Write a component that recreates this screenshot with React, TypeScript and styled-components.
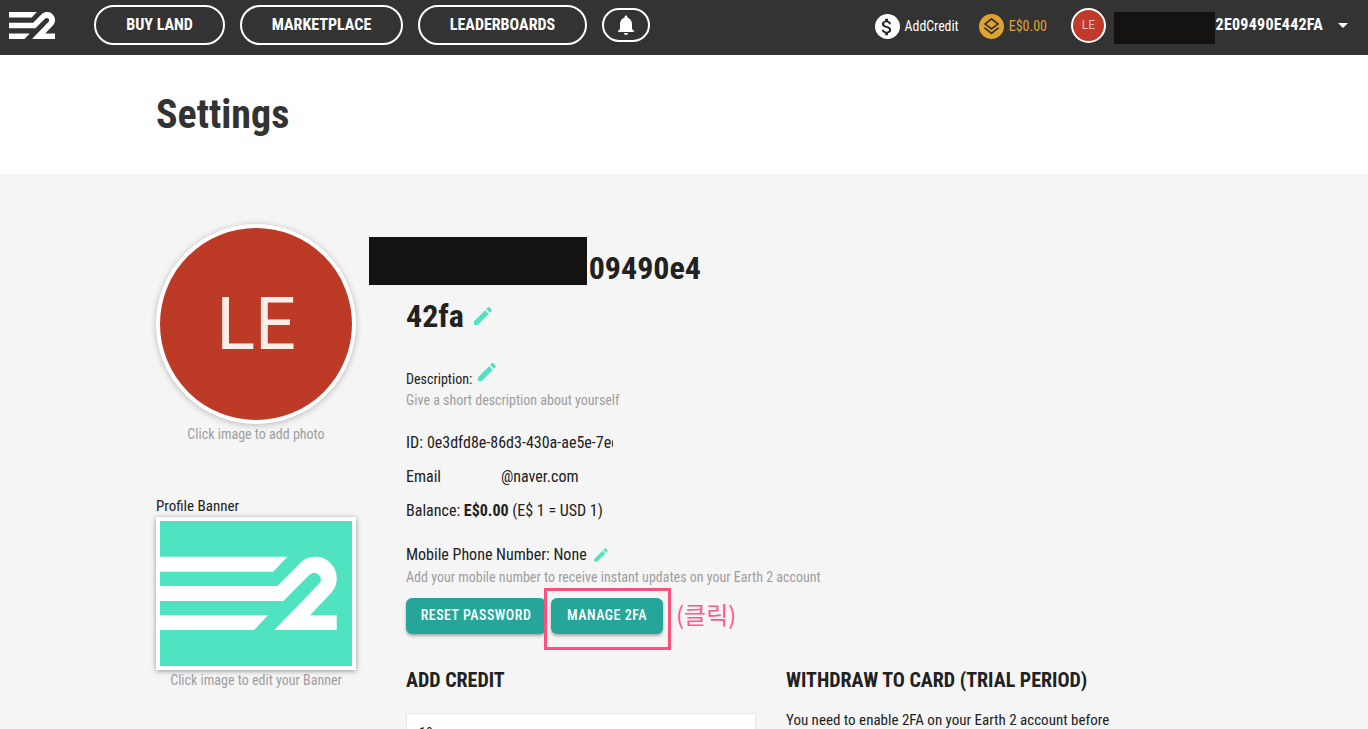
import React from 'react';
import styled, { createGlobalStyle } from 'styled-components';

const LOGO_PATH =
  'M0 35.7H127.3L113.3 50.7H0ZM0 94.3H108L94 109H0ZM0 65H117.3L143 39.3A21.7 21.7 0 0 1 171.5 71.5L150 94.3H176.7V109H114.3L160 61.7A6.7 6.7 0 0 0 150 53.3L123.3 80H0Z';

const GlobalStyle = createGlobalStyle`
  html, body { margin: 0; padding: 0; height: 100%; overflow: hidden; }
  body { background: #f5f5f5; font-family: Roboto, "Liberation Sans", sans-serif; font-stretch: 75%; color: #212121; }
  * { box-sizing: border-box; }
`;

const Header = styled.header`
  display: flex;
  align-items: center;
  height: 55px;
  padding: 0 20px 5px 9px;
  background: #333333;
`;

const Logo = styled.svg`
  display: block;
  width: 46px;
  height: 27px;
  margin-right: 39px;
`;

const Nav = styled.nav`
  display: flex;
  align-items: center;
  gap: 15px;
`;

const NavPill = styled.a<{ $w: number }>`
  display: flex;
  align-items: center;
  justify-content: center;
  width: ${({ $w }) => $w}px;
  height: 40px;
  padding-bottom: 2px;
  border: 2px solid #fff;
  border-radius: 20px;
  color: #fff;
  font-size: 16px;
  font-weight: 700;
`;

const BellPill = styled.a`
  display: flex;
  align-items: center;
  justify-content: center;
  width: 48px;
  height: 34px;
  border: 2px solid #fff;
  border-radius: 17px;
`;

const Right = styled.div`
  display: flex;
  align-items: center;
  margin-left: auto;
`;

const Coin = styled.span<{ $bg: string }>`
  display: flex;
  align-items: center;
  justify-content: center;
  width: 25px;
  height: 25px;
  margin: 3px 5px 0 0;
  border-radius: 50%;
  background: ${({ $bg }) => $bg};
`;

const Credit = styled.span<{ $color: string; $mr: number; $size: number }>`
  margin: 1px ${({ $mr }) => $mr}px 0 0;
  color: ${({ $color }) => $color};
  font-size: ${({ $size }) => $size}px;
`;

const MiniAvatar = styled.span`
  display: flex;
  align-items: center;
  justify-content: center;
  width: 35px;
  height: 35px;
  border: 2px solid #fff;
  border-radius: 50%;
  background: #c0392b;
  color: #eeb9b3;
  font-size: 12px;
  font-stretch: 100%;
`;

const UserName = styled.span`
  position: relative;
  display: block;
  width: 209px;
  margin: 0 15px 0 8px;
  color: #fff;
  font-size: 16px;
  font-weight: 700;
  line-height: 20px;
  text-align: right;
  white-space: nowrap;
  letter-spacing: 0.25px;
`;

const Redact = styled.span<{ $w: number; $h: number; $l: number; $t: number }>`
  position: absolute;
  left: ${({ $l }) => $l}px;
  top: ${({ $t }) => $t}px;
  width: ${({ $w }) => $w}px;
  height: ${({ $h }) => $h}px;
  background: #141311;
`;

const Caret = styled.span`
  width: 0;
  height: 0;
  border-left: 5px solid transparent;
  border-right: 5px solid transparent;
  border-top: 5px solid #fff;
`;

const TitleBar = styled.div`
  display: flex;
  align-items: center;
  height: 119px;
  padding-left: 156px;
  background: #fff;
`;

const PageTitle = styled.h1`
  margin: 0;
  font-size: 40px;
  font-weight: 700;
  color: #333;
`;

const Content = styled.main`
  display: flex;
  padding: 50px 0 0 156px;
`;

const LeftCol = styled.div`
  display: flex;
  flex-direction: column;
  width: 200px;
  margin-right: 50px;
`;

const BigAvatar = styled.div`
  display: flex;
  align-items: center;
  justify-content: center;
  width: 200px;
  height: 200px;
  border: 4px solid #fff;
  border-radius: 50%;
  background: #bd3a27;
  color: #fdeee8;
  font-size: 72px;
  font-weight: 400;
  font-stretch: 100%;
  box-shadow: 0 1px 6px rgba(0, 0, 0, 0.25);
`;

const Hint = styled.div`
  color: #9e9e9e;
  font-size: 14px;
  line-height: 20px;
`;

const CenterHint = styled(Hint)`
  text-align: center;
`;

const BannerLabel = styled.div`
  margin-top: 52px;
  font-size: 15px;
  line-height: 20px;
`;

const Banner = styled.div`
  width: 200px;
  height: 153px;
  margin-top: 1px;
  border: 4px solid #fff;
  background: #50e3c2;
  box-shadow: 0 1px 5px rgba(0, 0, 0, 0.4);
`;

const BannerArt = styled.svg`
  display: block;
  width: 100%;
  height: 100%;
`;

const Main = styled.div`
  display: flex;
  flex-direction: column;
  width: 720px;
  margin-top: 20px;
`;

const NameBlock = styled.div`
  position: relative;
  width: 295px;
  font-size: 32px;
  font-weight: 700;
  line-height: 48px;
  color: #212121;
`;

const NameLine = styled.div<{ $right?: boolean }>`
  display: flex;
  align-items: center;
  justify-content: ${({ $right }) => ($right ? 'flex-end' : 'flex-start')};
  gap: 7px;
`;

const Description = styled.div`
  display: flex;
  align-items: flex-end;
  gap: 3px;
  height: 29px;
  margin-top: 20px;
  font-size: 14px;
  line-height: 20px;
`;

const DescriptionHint = styled(Hint)`
  margin-top: 1px;
`;

const EditIcon = styled.svg<{ $size: number; $top?: boolean }>`
  display: block;
  flex: none;
  width: ${({ $size }) => $size}px;
  height: ${({ $size }) => $size}px;
  fill: #50e3c2;
  align-self: ${({ $top }) => ($top ? 'flex-start' : 'center')};
`;

const Row = styled.div<{ $mt: number; $gap?: number }>`
  display: flex;
  align-items: center;
  gap: ${({ $gap }) => $gap ?? 0}px;
  margin-top: ${({ $mt }) => $mt}px;
  font-size: 16px;
  line-height: 20px;
  white-space: pre;
`;

const Clip = styled.span`
  display: block;
  width: 186px;
  overflow: hidden;
`;

const EmailDomain = styled.span`
  margin-left: 60px;
`;

const SubHint = styled(Hint)`
  margin-top: 2px;
`;

const Buttons = styled.div`
  display: flex;
  align-items: center;
  margin-top: 11px;
`;

const Btn = styled.button<{ $w: number }>`
  display: block;
  width: ${({ $w }) => $w}px;
  height: 36px;
  padding: 0 0 2px;
  border: 0;
  border-radius: 6px;
  background: #26a69a;
  color: #fff;
  font-family: inherit;
  font-size: 14px;
  font-stretch: 75%;
  font-weight: 500;
  letter-spacing: 0.5px;
  box-shadow: 0 2px 3px rgba(0, 0, 0, 0.3);
`;

const Highlight = styled.div`
  position: relative;
  margin-left: 5px;
`;

const Callout = styled.span`
  position: absolute;
  left: -7px;
  top: -10px;
  width: 127px;
  height: 62px;
  border: 3px solid #f9527f;
  pointer-events: none;
`;

const ClickNote = styled.span`
  margin: 0 0 5px 13px;
  color: #fb5c88;
  font-size: 24px;
  line-height: 24px;
  font-family: "Noto Sans CJK KR", sans-serif;
  font-stretch: 100%;
  font-weight: 400;
`;

const Columns = styled.div`
  display: flex;
  margin-top: 32px;
`;

const Col = styled.div<{ $w: number }>`
  width: ${({ $w }) => $w}px;
`;

const SectionTitle = styled.h2`
  margin: 0;
  font-size: 20px;
  font-weight: 700;
  line-height: 28px;
`;

const AmountInput = styled.div`
  width: 350px;
  height: 60px;
  margin-top: 19px;
  padding: 11px 12px;
  border: 1px solid #e6e6e6;
  background: #fff;
  font-size: 14px;
`;

const Para = styled.p`
  margin: 16px 0 0;
  font-size: 15px;
  line-height: 20px;
`;

const Edit = ({ size, top }: { size: number; top?: boolean }) => (
  <EditIcon $size={size} $top={top} viewBox="0 0 24 24">
    <path d="M3 17.25V21h3.75L17.81 9.94l-3.75-3.75L3 17.25zM20.71 7.04c.39-.39.39-1.02 0-1.41l-2.34-2.34c-.39-.39-1.02-.39-1.41 0l-1.83 1.83 3.75 3.75 1.83-1.83z" />
  </EditIcon>
);

const App = () => (
  <>
    <GlobalStyle />
    <Header>
      <Logo viewBox="51.7 35.7 125 73.3" preserveAspectRatio="none">
        <path fill="#fff" d={LOGO_PATH} />
      </Logo>
      <Nav>
        <NavPill $w={131}>BUY LAND</NavPill>
        <NavPill $w={163}>MARKETPLACE</NavPill>
        <NavPill $w={169}>LEADERBOARDS</NavPill>
        <BellPill>
          <svg width="24" height="24" viewBox="0 0 24 24" fill="#fff">
            <path d="M12 22c1.100 0 2-.9 2-2h-4c0 1.100.9 2 2 2zm6-6v-5c0-3.070-1.630-5.640-4.500-6.320V4c0-.83-.67-1.500-1.500-1.500s-1.500.67-1.500 1.500v.68C7.640 5.360 6 7.920 6 11v5l-2 2v1h16v-1l-2-2z" />
          </svg>
        </BellPill>
      </Nav>
      <Right>
        <Coin $bg="#fff">
          <svg width="22" height="22" viewBox="0 0 24 24" fill="#222">
            <path d="M11.800 10.900c-2.270-.59-3-1.200-3-2.150 0-1.090 1.010-1.850 2.700-1.850 1.780 0 2.440.85 2.500 2.100h2.210c-.07-1.720-1.120-3.300-3.210-3.810V3h-3v2.160c-1.940.42-3.500 1.680-3.500 3.610 0 2.310 1.910 3.460 4.700 4.130 2.500.6 3 1.480 3 2.410 0 .69-.49 1.790-2.700 1.790-2.060 0-2.870-.92-2.980-2.100h-2.200c.12 2.190 1.760 3.420 3.680 3.830V21h3v-2.150c1.950-.37 3.500-1.500 3.500-3.550 0-2.840-2.430-3.810-4.700-4.400z" />
          </svg>
        </Coin>
        <Credit $color="#fff" $mr={20} $size={13.8}>AddCredit</Credit>
        <Coin $bg="#e0a32e">
          <svg width="21" height="21" viewBox="0 0 24 24" fill="#333">
            <path d="M11.990 18.540l-7.370-5.730L3 14.070l9 7 9-7-1.630-1.270-7.380 5.740zM12 16l7.360-5.730L21 9l-9-7-9 7 1.630 1.270L12 16zm0-11.470L17.740 9 12 13.470 6.260 9 12 4.530z" />
          </svg>
        </Coin>
        <Credit $color="#e0a32e" $mr={24} $size={14}>E$0.00</Credit>
        <MiniAvatar>LE</MiniAvatar>
        <UserName>
          2E09490E442FA
          <Redact $l={0} $t={-3} $w={101} $h={32} />
        </UserName>
        <Caret />
      </Right>
    </Header>
    <TitleBar>
      <PageTitle>Settings</PageTitle>
    </TitleBar>
    <Content>
      <LeftCol>
        <BigAvatar>LE</BigAvatar>
        <CenterHint>Click image to add photo</CenterHint>
        <BannerLabel>Profile Banner</BannerLabel>
        <Banner>
          <BannerArt viewBox="0 0 192 145">
            <path fill="#fff" d={LOGO_PATH} />
          </BannerArt>
        </Banner>
        <CenterHint>Click image to edit your Banner</CenterHint>
      </LeftCol>
      <Main>
        <NameBlock>
          <NameLine $right>09490e4</NameLine>
          <NameLine>
            42fa <Edit size={24} />
          </NameLine>
          <Redact $l={-37} $t={-7} $w={218} $h={48} />
        </NameBlock>
        <Description>
          Description: <Edit size={24} top />
        </Description>
        <DescriptionHint>Give a short description about yourself</DescriptionHint>
        <Row $mt={23} $gap={4}>
          ID:
          <Clip>0e3dfd8e-86d3-430a-ae5e-7ec</Clip>
        </Row>
        <Row $mt={14}>
          Email
          <EmailDomain>@naver.com</EmailDomain>
        </Row>
        <Row $mt={14}>
          <span>
            Balance: <b>E$0.00</b> (E$ 1 = USD 1)
          </span>
        </Row>
        <Row $mt={24} $gap={5}>
          Mobile Phone Number: None
          <Edit size={18} />
        </Row>
        <SubHint>Add your mobile number to receive instant updates on your Earth 2 account</SubHint>
        <Buttons>
          <Btn $w={140}>RESET PASSWORD</Btn>
          <Highlight>
            <Btn $w={112}>MANAGE 2FA</Btn>
            <Callout />
          </Highlight>
          <ClickNote>(클릭)</ClickNote>
        </Buttons>
        <Columns>
          <Col $w={380}>
            <SectionTitle>ADD CREDIT</SectionTitle>
            <AmountInput>10</AmountInput>
          </Col>
          <Col $w={340}>
            <SectionTitle>WITHDRAW TO CARD (TRIAL PERIOD)</SectionTitle>
            <Para>You need to enable 2FA on your Earth 2 account before</Para>
          </Col>
        </Columns>
      </Main>
    </Content>
  </>
);

export default App;
